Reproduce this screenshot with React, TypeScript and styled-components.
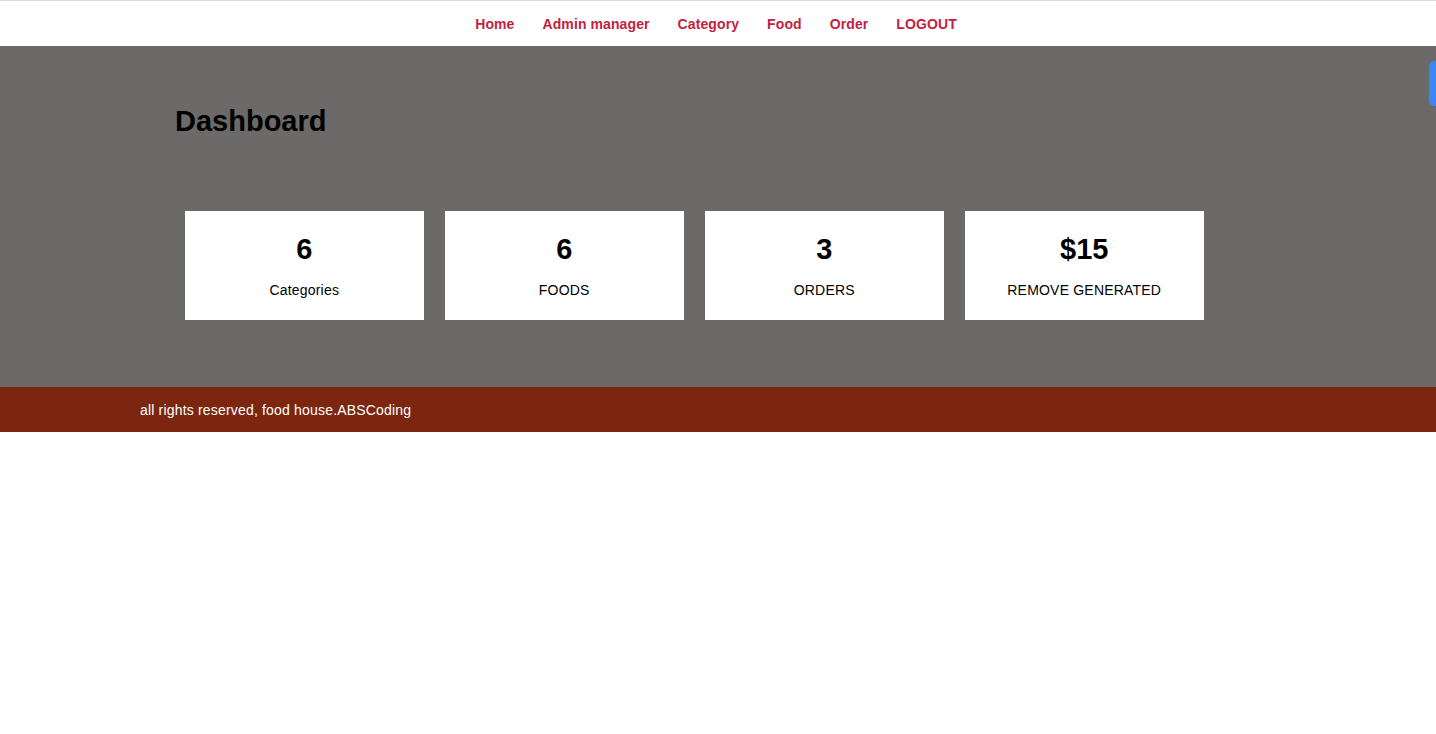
import React from "react";
import styled, { createGlobalStyle } from "styled-components";

const GlobalStyle = createGlobalStyle`
  html, body { margin: 0; padding: 0; background: #ffffff; }
  body { font-family: "Liberation Sans", Arial, sans-serif; }
  * { box-sizing: border-box; }
`;

const Page = styled.div`
  position: relative;
  width: 100%;
  min-height: 734px;
  background: #ffffff;
`;

const NavBar = styled.nav`
  height: 46px;
  border-top: 1px solid #dcdcdc;
  background: #ffffff;
  display: flex;
  align-items: center;
  justify-content: center;
  gap: 28px;
  padding-right: 4px;
`;

const NavLink = styled.a`
  font-size: 14px;
  line-height: 16px;
  font-weight: 700;
  color: #c2223f;
  text-decoration: none;
  letter-spacing: 0.1px;
  cursor: pointer;
`;

const Main = styled.main`
  background: #6b6a68;
  height: 341px;
  padding-top: 59px;
`;

const Container = styled.div`
  width: 1156px;
  margin: 0 auto;
`;

const Title = styled.h1`
  margin: 0 0 0 35px;
  font-size: 29px;
  line-height: 32px;
  font-weight: 700;
  color: #000000;
`;

const Cards = styled.div`
  display: grid;
  grid-template-columns: repeat(4, 238.5px);
  column-gap: 21.5px;
  margin: 74px 0 0 45px;
`;

const Card = styled.div`
  background: #ffffff;
  height: 109px;
  padding-top: 22px;
  display: flex;
  flex-direction: column;
  align-items: center;
`;

const Value = styled.div`
  font-size: 29px;
  line-height: 32px;
  font-weight: 700;
  color: #000000;
`;

const Label = styled.div`
  margin-top: 17px;
  font-size: 14px;
  line-height: 16px;
  letter-spacing: 0.2px;
  color: #000000;
`;

const Footer = styled.footer`
  background: #7c2610;
  height: 45px;
  display: flex;
  align-items: center;
`;

const FooterText = styled.p`
  margin: 0;
  font-size: 14px;
  line-height: 16px;
  letter-spacing: 0.18px;
  color: #ffffff;
`;

const SideTab = styled.div`
  position: absolute;
  right: 0;
  top: 61px;
  width: 7px;
  height: 45px;
  background: #3a86f8;
  border-radius: 5px 0 0 5px;
`;

const links = ["Home", "Admin manager", "Category", "Food", "Order", "LOGOUT"];

const stats = [
  { value: "6", label: "Categories" },
  { value: "6", label: "FOODS" },
  { value: "3", label: "ORDERS" },
  { value: "$15", label: "REMOVE GENERATED" },
];

export default function App() {
  return (
    <Page>
      <GlobalStyle />
      <NavBar>
        {links.map((l) => (
          <NavLink key={l}>{l}</NavLink>
        ))}
      </NavBar>
      <Main>
        <Container>
          <Title>Dashboard</Title>
          <Cards>
            {stats.map((s) => (
              <Card key={s.label}>
                <Value>{s.value}</Value>
                <Label>{s.label}</Label>
              </Card>
            ))}
          </Cards>
        </Container>
      </Main>
      <Footer>
        <Container>
          <FooterText>all rights reserved, food house.ABSCoding</FooterText>
        </Container>
      </Footer>
      <SideTab />
    </Page>
  );
}
